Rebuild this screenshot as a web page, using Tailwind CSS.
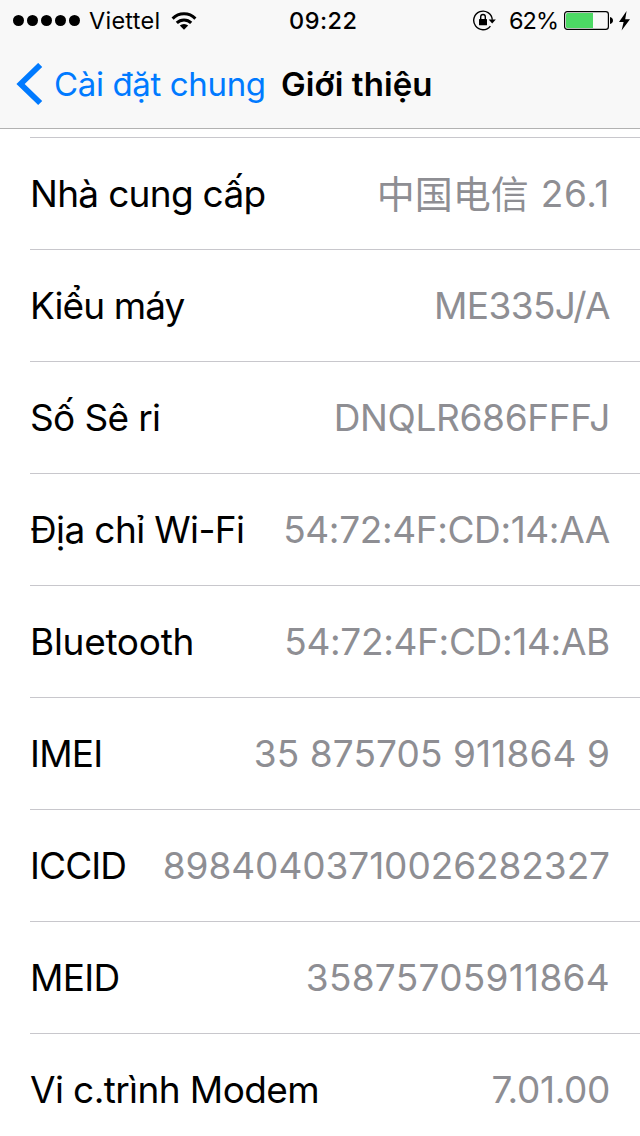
<!DOCTYPE html>
<html lang="vi">

<head>
  <meta charset="UTF-8">
  <meta name="viewport" content="width=device-width, initial-scale=1.0">
  <title>Giới thiệu</title>
  <script src="https://cdn.jsdelivr.net/npm/@tailwindcss/browser@4"></script>
</head>

<body class="h-[1136px] overflow-hidden bg-white font-['Inter','Noto_Sans_CJK_SC',sans-serif] text-black">

  <header class="h-[129px] border-b border-[#b2b2b2] bg-[#f8f8f8]">
    <!-- Status bar -->
    <div class="flex h-[41px] items-center text-[23.5px] leading-none whitespace-nowrap">
      <div class="flex w-[289px] items-center pl-[13px]">
        <div class="flex gap-[3px]">
          <span class="size-[11px] rounded-full bg-black"></span>
          <span class="size-[11px] rounded-full bg-black"></span>
          <span class="size-[11px] rounded-full bg-black"></span>
          <span class="size-[11px] rounded-full bg-black"></span>
          <span class="size-[11px] rounded-full bg-black"></span>
        </div>
        <span class="ml-[9px] w-[74px] tracking-[0.25px]">Viettel</span>
        <svg class="ml-2 h-[18px] w-[26px]" viewBox="0 0 26 18" fill="none" stroke="#000" stroke-width="3">
          <path d="M1.6 6.6a16 16 0 0 1 22.8 0" />
          <path d="M5.8 10.9a10.2 10.2 0 0 1 14.4 0" />
          <path d="M13 17.8l-4.2-4.2a6 6 0 0 1 8.4 0z" fill="#000" stroke="none" />
        </svg>
      </div>
      <span class="font-medium tracking-[0.5px]">09:22</span>
      <div class="ml-auto flex items-center pr-[9px]">
        <!-- Rotation lock -->
        <svg class="h-[22px] w-[24px]" viewBox="0 0 24 22" fill="none">
          <path d="M18.4 16.1A9.3 9.3 0 1 1 20.3 9.8" stroke="#000" stroke-width="1.4" />
          <path d="M16.6 9.6h7.2l-3.6 3.8z" fill="#000" />
          <rect x="7" y="9" width="8" height="6.2" rx=".5" fill="#000" />
          <path d="M8.7 9.4V6.8a2.3 2.3 0 0 1 4.6 0V9.4" stroke="#000" stroke-width="1.4" />
        </svg>
        <span class="ml-[13px] w-[55px] tracking-[-1px]">62%</span>
        <svg class="h-[20px] w-[50px]" viewBox="0 0 50 20" fill="none">
          <rect x=".6" y=".6" width="43.8" height="17.8" rx="2.6" stroke="#000" stroke-width="1.2" />
          <path d="M3.5 2H29v15H3.5A1.5 1.5 0 0 1 2 15.5V3.5A1.5 1.5 0 0 1 3.5 2z" fill="#4cd964" />
          <path d="M46 6c1.8.3 3 1.6 3 3.5s-1.2 3.2-3 3.5z" fill="#000" />
        </svg>
        <svg class="ml-[4px] h-[20px] w-[13px]" viewBox="0 0 13 20">
          <path d="M8.6 0L1 11h4.6L3.6 19.5 12 8.2H7.2z" fill="#000" />
        </svg>
      </div>
    </div>

    <!-- Navigation bar -->
    <nav class="flex h-[87px] items-center text-[33px] leading-none whitespace-nowrap">
      <a href="#" class="flex w-[281px] items-center pl-4 text-[#007aff]">
        <svg class="h-[43px] w-[27px]" viewBox="0 0 27 43" fill="none" stroke="#007aff" stroke-width="5.8">
          <path d="M24.2 2L4.6 21l19.6 19" />
        </svg>
        <span class="ml-[11px] tracking-[-0.36px]">Cài đặt chung</span>
      </a>
      <h1 class="font-semibold tracking-[0.1px]">Giới thiệu</h1>
    </nav>
  </header>

  <!-- Device details -->
  <main class="pt-2 pl-[30px]">
    <dl class="border-t border-[#c8c7cc] text-[37px] leading-none whitespace-nowrap">
      <div class="flex h-28 items-center justify-between border-b border-[#c8c7cc] pr-[30px]">
        <dt class="tracking-[-0.7px]">Nhà cung cấp</dt>
        <dd class="flex items-center text-[#8e8e93]">
          <span class="mr-3 pt-px text-[38px]">中国电信</span>
          <span class="tracking-[0.6px]">26.1</span>
        </dd>
      </div>
      <div class="flex h-28 items-center justify-between border-b border-[#c8c7cc] pr-[30px]">
        <dt class="tracking-[-0.9px]">Kiểu máy</dt>
        <dd class="tracking-[-0.6px] text-[#8e8e93]">ME335J/A</dd>
      </div>
      <div class="flex h-28 items-center justify-between border-b border-[#c8c7cc] pr-[30px]">
        <dt class="tracking-[-0.65px]">Số Sê ri</dt>
        <dd class="tracking-[-0.35px] text-[#8e8e93]">DNQLR686FFFJ</dd>
      </div>
      <div class="flex h-28 items-center justify-between border-b border-[#c8c7cc] pr-[30px]">
        <dt class="tracking-[-0.62px]">Địa chỉ Wi-Fi</dt>
        <dd class="tracking-[-0.38px] text-[#8e8e93]">54:72:4F:CD:14:AA</dd>
      </div>
      <div class="flex h-28 items-center justify-between border-b border-[#c8c7cc] pr-[30px]">
        <dt class="tracking-[-0.3px]">Bluetooth</dt>
        <dd class="tracking-[-0.33px] text-[#8e8e93]">54:72:4F:CD:14:AB</dd>
      </div>
      <div class="flex h-28 items-center justify-between border-b border-[#c8c7cc] pr-[30px]">
        <dt class="tracking-[-0.8px]">IMEI</dt>
        <dd class="tracking-[0.1px] text-[#8e8e93]">35 875705 911864 9</dd>
      </div>
      <div class="flex h-28 items-center justify-between border-b border-[#c8c7cc] pr-[30px]">
        <dt class="tracking-[-0.9px]">ICCID</dt>
        <dd class="tracking-[-0.07px] text-[#8e8e93]">89840403710026282327</dd>
      </div>
      <div class="flex h-28 items-center justify-between border-b border-[#c8c7cc] pr-[30px]">
        <dt class="tracking-[-0.7px]">MEID</dt>
        <dd class="tracking-[0.28px] text-[#8e8e93]">35875705911864</dd>
      </div>
      <div class="flex h-28 items-center justify-between border-b border-[#c8c7cc] pr-[30px]">
        <dt class="tracking-[-0.6px]">Vi c.trình Modem</dt>
        <dd class="tracking-[-0.35px] text-[#8e8e93]">7.01.00</dd>
      </div>
    </dl>
  </main>

</body>

</html>
